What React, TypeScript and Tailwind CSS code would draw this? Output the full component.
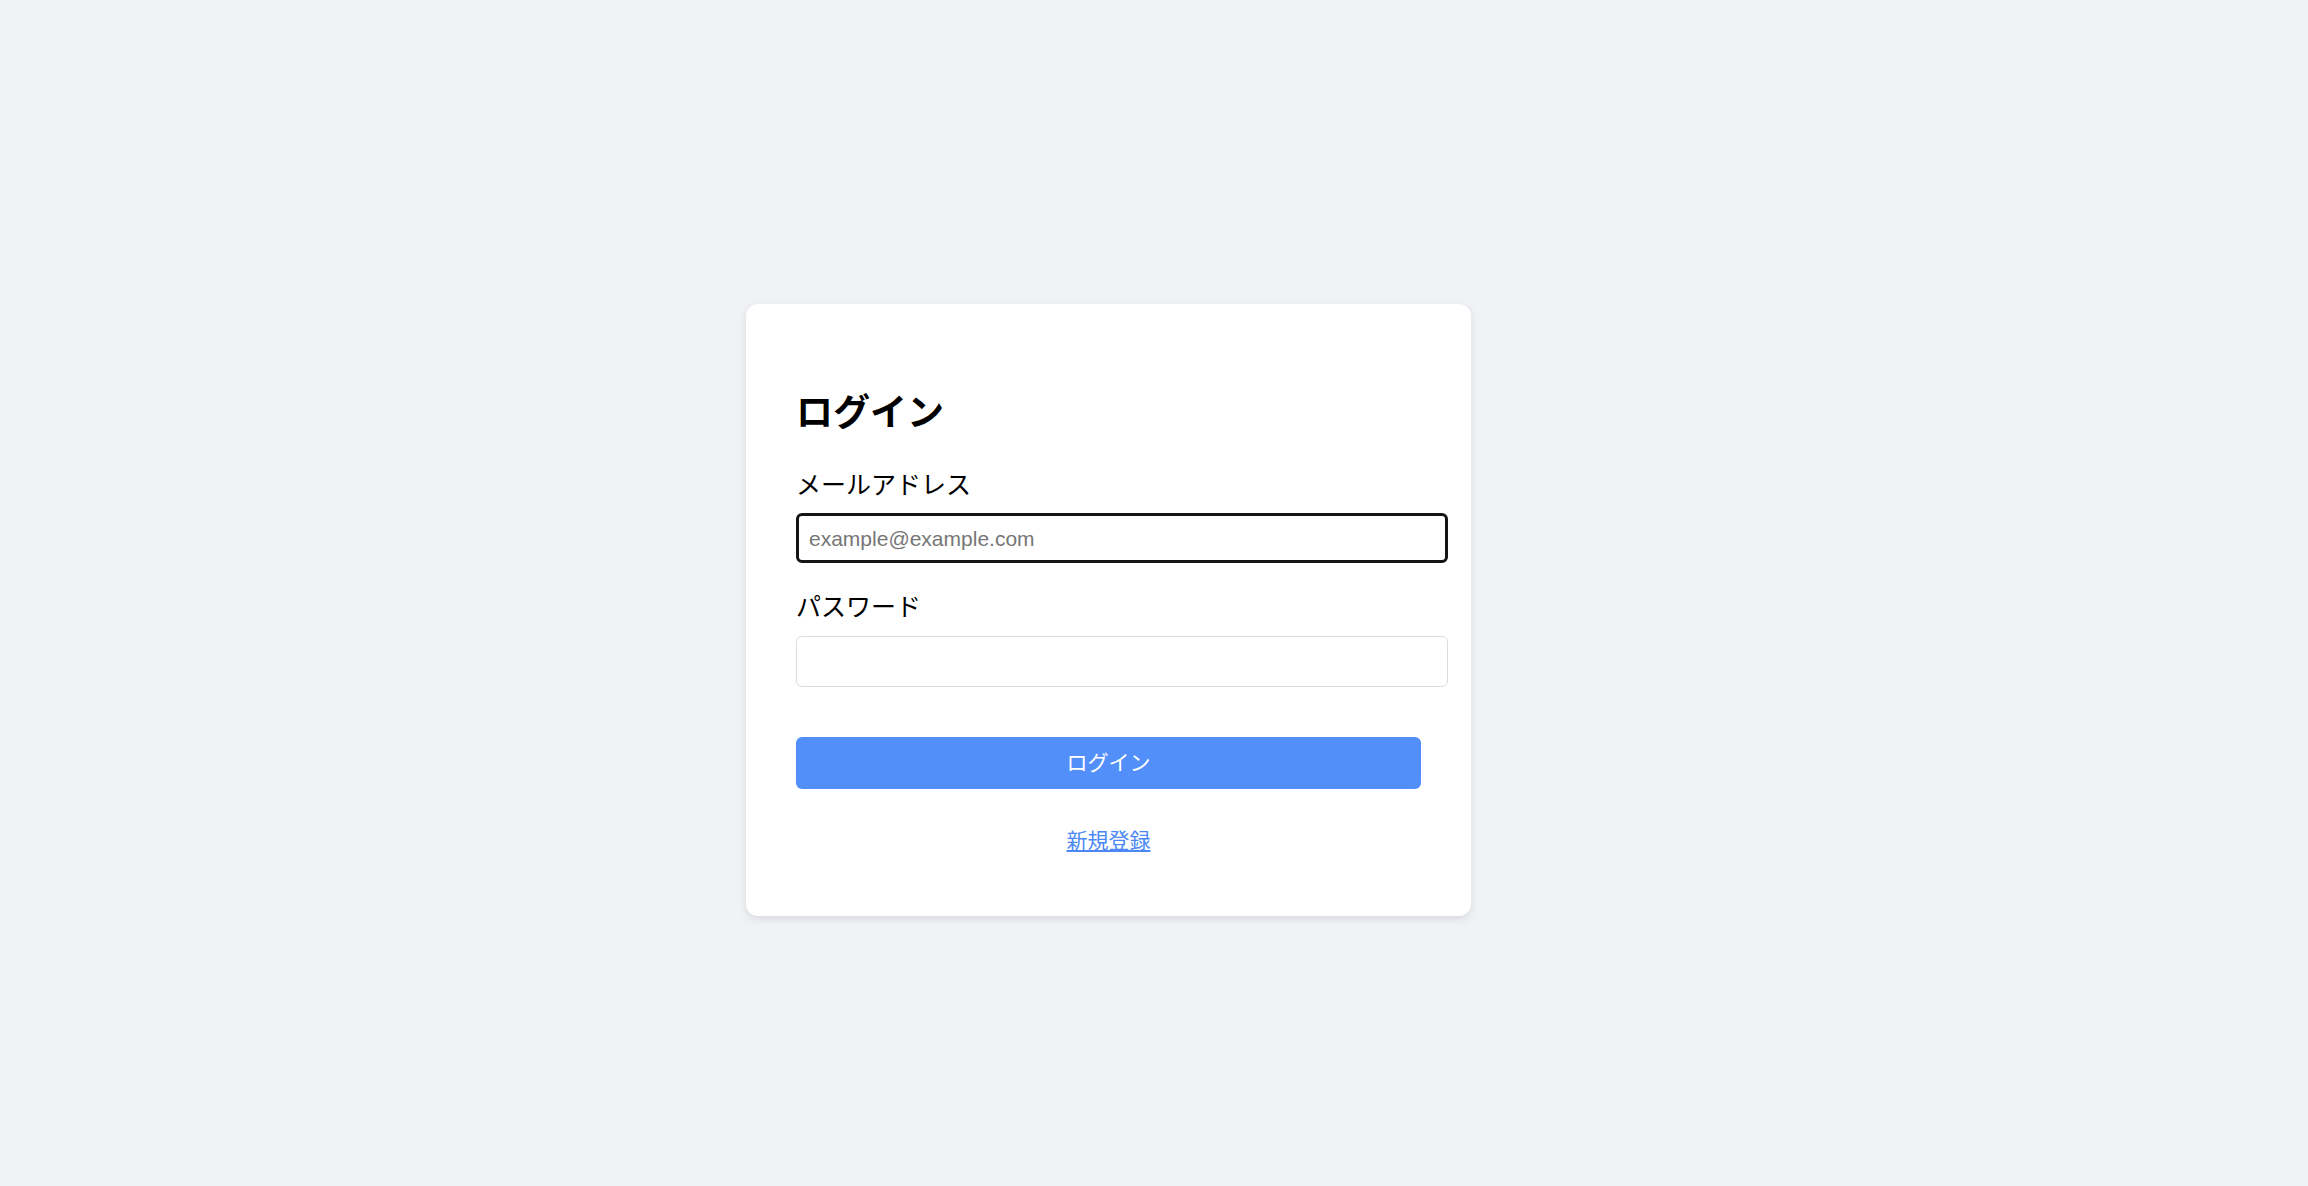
import React from "react";

export default function App() {
  const font = { fontFamily: '"Liberation Sans", "Noto Sans CJK JP", sans-serif' };
  return (
    <div
      className="flex h-screen w-full items-center justify-center bg-[#f0f2f5] pr-[91px] pt-[34px]"
      style={font}
    >
      <div className="flex w-[725px] flex-col rounded-[12px] bg-white px-[50px] pt-[89px] pb-[61px] shadow-[0_3px_8px_rgba(0,0,0,0.1)]">
        <h2 className="text-[37px] font-bold leading-[42px] text-black">ログイン</h2>

        <label className="mt-[36px] text-[25px] leading-[28px] text-black">メールアドレス</label>
        <input
          type="email"
          placeholder="example@example.com"
          className="mt-[14px] box-border h-[50px] w-[652px] rounded-[6px] border-[3px] border-[#141414] bg-white px-[10px] pt-[2px] text-[21px] text-black outline-none placeholder:text-[#767676]"
          style={font}
        />

        <label className="mt-[30px] text-[25px] leading-[28px] text-black">パスワード</label>
        <input
          type="password"
          className="mt-[15px] box-border h-[51px] w-[652px] rounded-[6px] border-[1.5px] border-[#dcdcdc] bg-white px-[12px] text-[21px] outline-none"
          style={font}
        />

        <button
          type="button"
          className="mt-[50px] h-[52px] w-full rounded-[6px] bg-[#528ffa] text-[21px] leading-[28px] text-white"
          style={font}
        >
          ログイン
        </button>

        <div className="mt-[38px] flex justify-center">
          <a href="#" className="text-[21px] leading-[28px] text-[#4b87f5] underline">
            新規登録
          </a>
        </div>
      </div>
    </div>
  );
}
